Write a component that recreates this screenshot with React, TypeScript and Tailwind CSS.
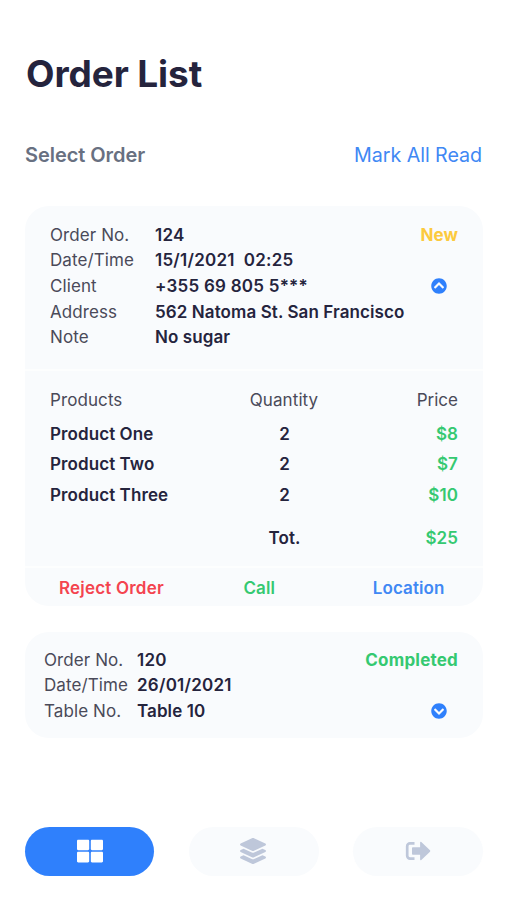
import type { ReactNode } from "react";
import { FaChevronCircleDown, FaChevronCircleUp, FaLayerGroup, FaThLarge } from "react-icons/fa";

function SignOutIcon() {
  return (
    <svg viewBox="0 0 26 20" className="mb-px h-5 w-[26px]" fill="none">
      <path d="M9.5 2.4H5A2.8 2.8 0 0 0 2.2 5.2v9.6A2.8 2.8 0 0 0 5 17.6h4.5" stroke="currentColor" strokeWidth="2.7" />
      <path
        d="M7.8 6.2h7.3V1.6c0-.7.7-1 1.2-.5l8.7 8.2c.4.4.4 1 0 1.4l-8.7 8.2c-.5.5-1.2.2-1.2-.5v-4.6H7.8c-.5 0-.8-.3-.8-.8V7c0-.5.3-.8.8-.8Z"
        fill="currentColor"
      />
    </svg>
  );
}

function Details({ rows, cols }: { rows: string[][]; cols: string }) {
  return (
    <dl className={`grid ${cols} content-start items-center whitespace-pre`}>
      {rows.map(([label, value]) => (
        <div key={label} className="contents">
          <dt className="h-[25.7px] leading-[25.7px] text-[#4a4a59]">{label}</dt>
          <dd className={`h-[25.7px] leading-[25.7px] font-semibold ${/^[\d+]\S*\d.*[\d*]$/.test(value) ? "tracking-[0.24px]" : ""}`}>
            {value}
          </dd>
        </div>
      ))}
    </dl>
  );
}

function NavButton({ active, children }: { active?: boolean; children: ReactNode }) {
  return (
    <button
      className={`flex h-[49px] items-center justify-center rounded-full ${
        active ? "w-[129px] bg-[#2f80fc] text-white" : "w-[130px] bg-[#f9fbfd] text-[#bec7da]"
      }`}
    >
      {children}
    </button>
  );
}

const products = [
  ["Product One", "2", "$8"],
  ["Product Two", "2", "$7"],
  ["Product Three", "2", "$10"],
];

export default function App() {
  return (
    <main className="flex h-[900px] w-[507px] flex-col bg-white pr-[24px] pl-[25px] font-['Inter',sans-serif] text-[17px] leading-6 tracking-[0.09px] text-[#25243d]">
      <h1 className="mt-[50px] pl-px text-[37px] leading-[48px] font-bold tracking-[-0.1px]">Order List</h1>
      <div className="mt-[43px] flex h-[28px] items-center justify-between">
        <h2 className="text-[20px] font-semibold tracking-[-0.05px] text-[#687081]">Select Order</h2>
        <button className="pr-px text-[19.7px] tracking-[-0.06px] text-[#4088f4]">Mark All Read</button>
      </div>

      <section className="mt-[37px] flex h-[400px] flex-col rounded-[24px] bg-[#f9fbfd]">
        <div className="flex h-[165px] justify-between border-b-2 border-[#fdfefe] pt-[16px] pr-[25px] pl-[25px]">
          <div className="pt-[0.6px]">
            <Details
              cols="grid-cols-[105px_auto]"
              rows={[
                ["Order No.", "124"],
                ["Date/Time", "15/1/2021  02:25"],
                ["Client", "+355 69 805 5***"],
                ["Address", "562 Natoma St. San Francisco"],
                ["Note", "No sugar"],
              ]}
            />
          </div>
          <div className="flex flex-col items-end">
            <span className="h-[26px] leading-[26px] font-bold text-[#fcca3e]">New</span>
            <FaChevronCircleUp className="mt-[30px] mr-[11.5px] size-4 text-[#2f80fc]" />
          </div>
        </div>
        <div className="h-[197px] border-b-2 border-[#fdfefe] px-[25px] pt-[16px]">
          <div className="grid h-[25px] grid-cols-[167px_134px_1fr] items-center text-[#4a4a59]">
            <span>Products</span>
            <span className="text-center">Quantity</span>
            <span className="text-right tracking-normal">Price</span>
          </div>
          <div className="mt-[6.5px]">
            {products.map(([name, quantity, price]) => (
              <div key={name} className="grid h-[30.5px] grid-cols-[167px_135px_1fr] items-center font-semibold">
                <span>{name}</span>
                <span className="text-center">{quantity}</span>
                <span className="text-right text-[#35c971]">{price}</span>
              </div>
            ))}
          </div>
          <div className="mt-[15.5px] grid grid-cols-[167px_135px_1fr] items-center font-semibold">
            <span className="col-start-2 text-center">Tot.</span>
            <span className="text-right text-[#35c971]">$25</span>
          </div>
        </div>
        <div className="grid h-[38px] grid-cols-[184.5px_1fr_auto] items-center pt-px pr-[38.5px] pl-[34px] font-semibold">
          <button className="text-left tracking-[0.2px] text-[#f4444f]">Reject Order</button>
          <button className="text-left text-[#35c971]">Call</button>
          <button className="text-[#4088f4]">Location</button>
        </div>
      </section>

      <section className="mt-[26px] flex h-[106px] justify-between rounded-[24px] bg-[#f9fbfd] pt-[15px] pr-[25px] pl-[19px]">
        <div className="pt-[0.6px]">
          <Details
            cols="grid-cols-[93px_auto]"
            rows={[
              ["Order No.", "120"],
              ["Date/Time", "26/01/2021"],
              ["Table No.", "Table 10"],
            ]}
          />
        </div>
        <div className="flex flex-col items-end">
          <span className="h-[26px] leading-[26px] font-bold tracking-[0.2px] text-[#35c971]">Completed</span>
          <FaChevronCircleDown className="mt-[30px] mr-[11.5px] size-4 text-[#2f80fc]" />
        </div>
      </section>

      <nav className="mt-[89px] flex justify-between">
        <NavButton active>
          <FaThLarge className="mb-px size-[26px]" />
        </NavButton>
        <NavButton>
          <FaLayerGroup className="mr-px mb-px size-[26px]" />
        </NavButton>
        <NavButton>
          <SignOutIcon />
        </NavButton>
      </nav>
    </main>
  );
}
